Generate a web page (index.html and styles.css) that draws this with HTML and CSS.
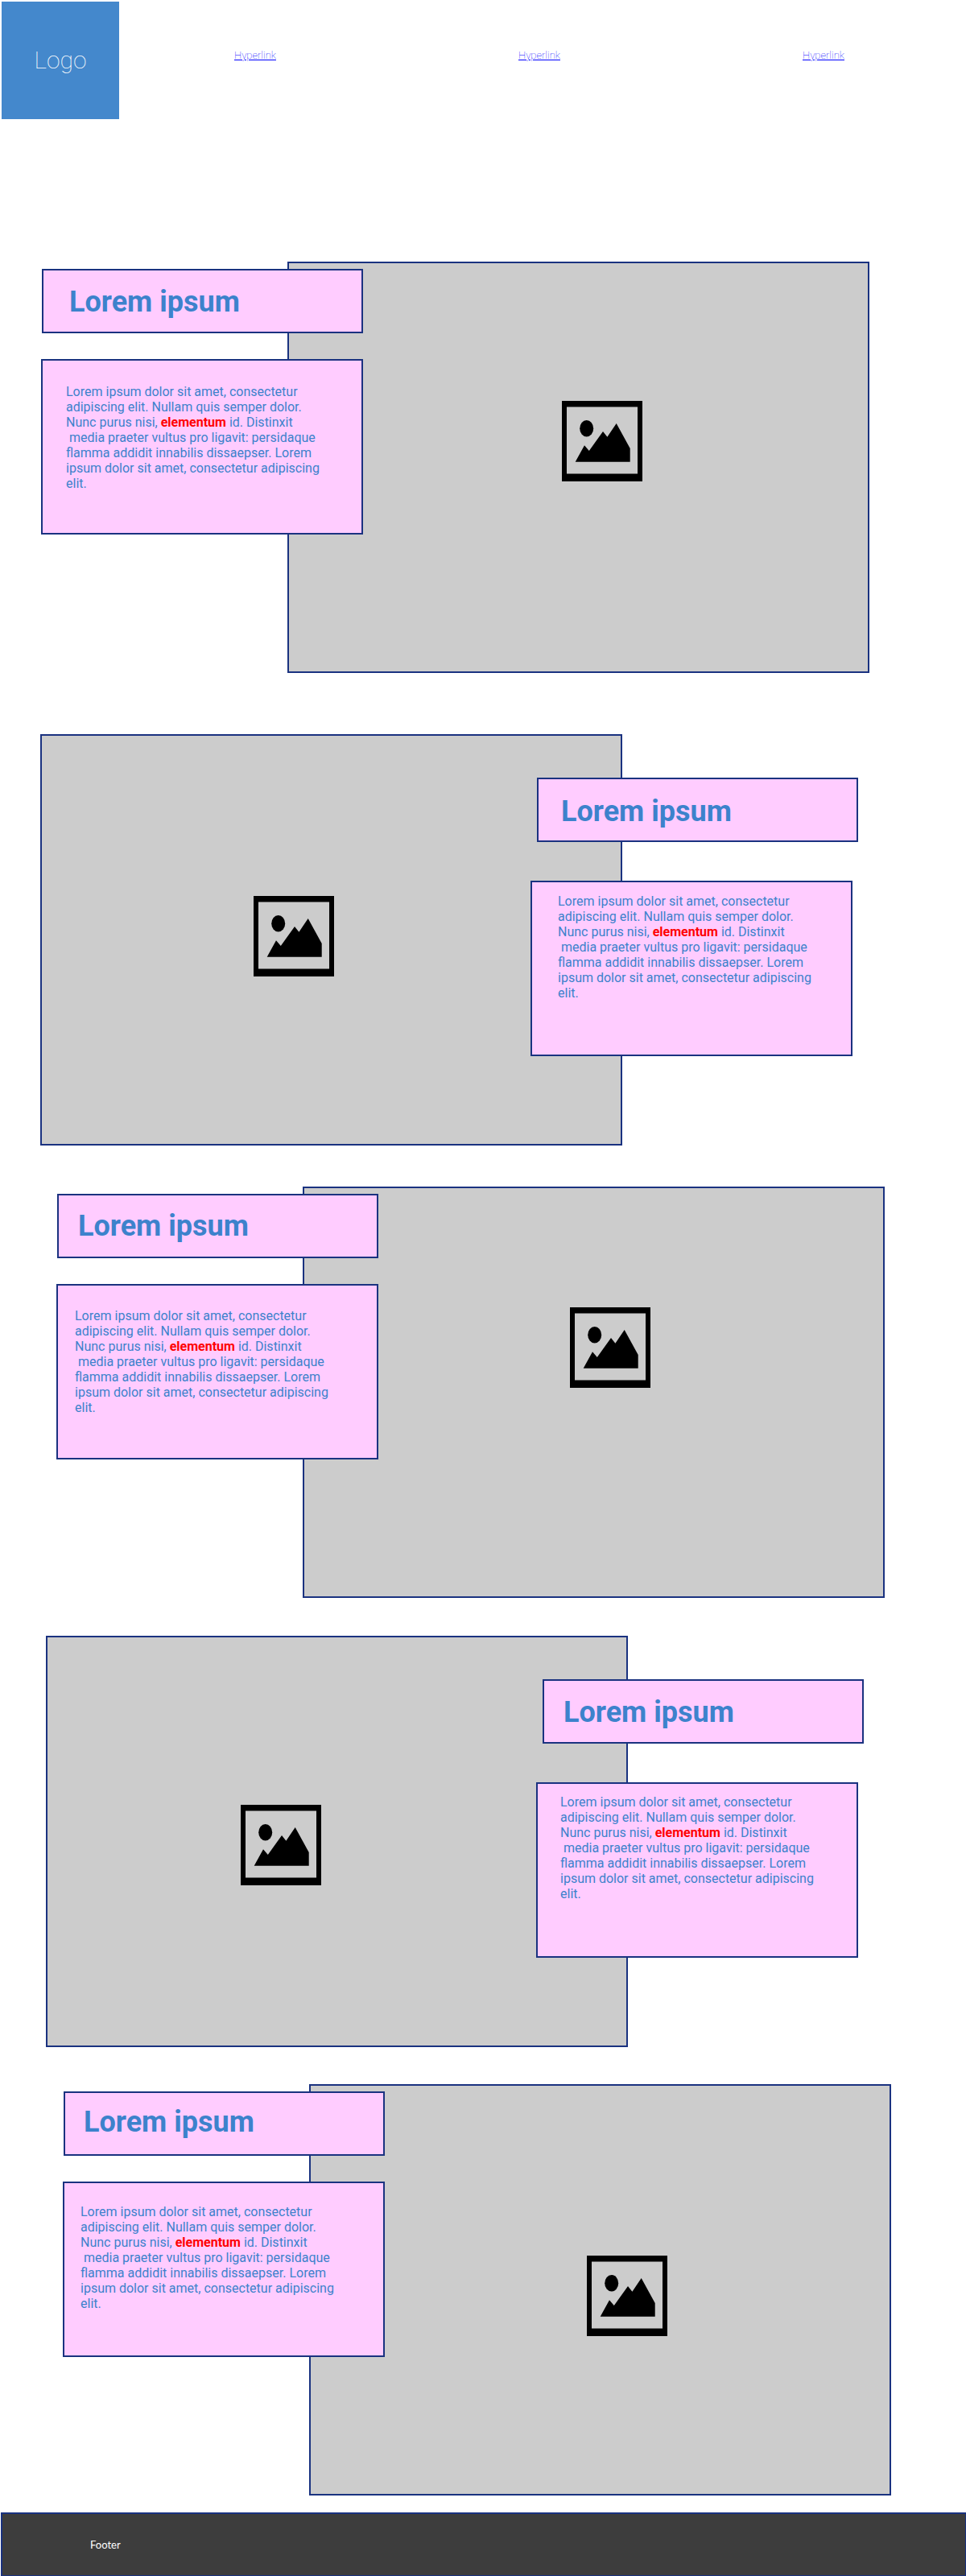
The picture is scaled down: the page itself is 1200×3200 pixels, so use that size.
FILE: index.html
```html
<!DOCTYPE html>
<html lang="en">
<head>
<meta charset="utf-8">
<title>Lorem ipsum</title>
<link rel="stylesheet" href="styles.css">
</head>
<body>
<svg class="sprite" width="0" height="0" aria-hidden="true">
  <symbol id="picture" viewBox="0 0 100 100">
    <path fill-rule="evenodd" d="M0 0H100V100H0ZM6 7.4V90.5H94V7.4Z"/>
    <ellipse cx="30.7" cy="34.3" rx="8.5" ry="10.3"/>
    <path d="M16.7 75.8L28 55.3L33.8 62L51 38L56.4 44.7L67.7 28L84.7 59V75.8Z"/>
  </symbol>
</svg>
<header class="header">
  <div class="logo">Logo</div>
  <nav class="nav">
    <a class="nav-link" href="#">Hyperlink</a>
    <a class="nav-link" href="#">Hyperlink</a>
    <a class="nav-link" href="#">Hyperlink</a>
  </nav>
</header>
<main class="main">
  <section class="feature feature-1">
    <div class="cards">
      <h2 class="title">Lorem ipsum</h2>
      <p class="copy">Lorem ipsum dolor sit amet, consectetur<br>adipiscing elit. Nullam quis semper dolor.<br>Nunc purus nisi, <strong>elementum</strong> id. Distinxit<br>&nbsp;media praeter vultus pro ligavit: persidaque<br>flamma addidit innabilis dissaepser. Lorem<br>ipsum dolor sit amet, consectetur adipiscing<br>elit.</p>
    </div>
    <figure class="media"><svg class="icon"><use href="#picture"/></svg></figure>
  </section>
  <section class="feature feature-right feature-2">
    <div class="cards">
      <h2 class="title">Lorem ipsum</h2>
      <p class="copy">Lorem ipsum dolor sit amet, consectetur<br>adipiscing elit. Nullam quis semper dolor.<br>Nunc purus nisi, <strong>elementum</strong> id. Distinxit<br>&nbsp;media praeter vultus pro ligavit: persidaque<br>flamma addidit innabilis dissaepser. Lorem<br>ipsum dolor sit amet, consectetur adipiscing<br>elit.</p>
    </div>
    <figure class="media"><svg class="icon"><use href="#picture"/></svg></figure>
  </section>
  <section class="feature feature-3">
    <div class="cards">
      <h2 class="title">Lorem ipsum</h2>
      <p class="copy">Lorem ipsum dolor sit amet, consectetur<br>adipiscing elit. Nullam quis semper dolor.<br>Nunc purus nisi, <strong>elementum</strong> id. Distinxit<br>&nbsp;media praeter vultus pro ligavit: persidaque<br>flamma addidit innabilis dissaepser. Lorem<br>ipsum dolor sit amet, consectetur adipiscing<br>elit.</p>
    </div>
    <figure class="media"><svg class="icon"><use href="#picture"/></svg></figure>
  </section>
  <section class="feature feature-right feature-4">
    <div class="cards">
      <h2 class="title">Lorem ipsum</h2>
      <p class="copy">Lorem ipsum dolor sit amet, consectetur<br>adipiscing elit. Nullam quis semper dolor.<br>Nunc purus nisi, <strong>elementum</strong> id. Distinxit<br>&nbsp;media praeter vultus pro ligavit: persidaque<br>flamma addidit innabilis dissaepser. Lorem<br>ipsum dolor sit amet, consectetur adipiscing<br>elit.</p>
    </div>
    <figure class="media"><svg class="icon"><use href="#picture"/></svg></figure>
  </section>
  <section class="feature feature-5">
    <div class="cards">
      <h2 class="title">Lorem ipsum</h2>
      <p class="copy">Lorem ipsum dolor sit amet, consectetur<br>adipiscing elit. Nullam quis semper dolor.<br>Nunc purus nisi, <strong>elementum</strong> id. Distinxit<br>&nbsp;media praeter vultus pro ligavit: persidaque<br>flamma addidit innabilis dissaepser. Lorem<br>ipsum dolor sit amet, consectetur adipiscing<br>elit.</p>
    </div>
    <figure class="media"><svg class="icon"><use href="#picture"/></svg></figure>
  </section>
</main>
<footer class="footer">Footer</footer>
</body>
</html>
```
FILE: styles.css
```css
* {
  box-sizing: border-box;
}

body {
  margin: 0;
  width: 1200px;
  height: 3200px;
  overflow: hidden;
  display: flex;
  flex-direction: column;
  background: #fff;
  font-family: Roboto, sans-serif;
}

.sprite {
  display: none;
}

.header {
  display: flex;
  height: 325px;
  padding: 2px 0 0 2px;
}

.logo {
  display: flex;
  align-items: center;
  justify-content: center;
  width: 146px;
  height: 146px;
  padding-bottom: 1px;
  background: #4488cc;
  color: #fff;
  font-size: 30px;
  font-weight: 100;
  line-height: 35px;
}

.nav {
  display: flex;
  gap: 301px;
  padding: 59px 0 0 143px;
}

.nav-link {
  width: 52px;
  color: #0000ff;
  font-size: 13px;
  font-weight: 100;
  line-height: 15px;
  white-space: nowrap;
}

.main {
  display: flex;
  flex-direction: column;
}

.feature {
  display: flex;
  height: 511px;
}

.feature-right {
  flex-direction: row-reverse;
  justify-content: flex-end;
}

.cards {
  z-index: 1;
  width: 400px;
  display: flex;
  flex-direction: column;
  gap: 32px;
  padding-top: 9px;
}

.feature-right .cards {
  width: 407px;
  gap: 48px;
  padding-top: 54px;
}

.title,
.copy {
  margin: 0;
  border: 2px solid #1a3280;
  background: #ffccff;
  color: #3d82cc;
  white-space: nowrap;
}

.title {
  width: 399px;
  height: 80px;
  align-self: flex-end;
  font-size: 36px;
  font-weight: 700;
  line-height: 42px;
}

.copy {
  width: 400px;
  height: 218px;
  font-size: 16px;
  line-height: 19px;
}

.copy strong {
  color: #ff0000;
  font-weight: 700;
}

.media {
  width: 723px;
  height: 511px;
  margin: 0 0 0 -94px;
  border: 2px solid #1a3280;
  background: #cccccc;
}

.feature-right .media {
  margin: 0 -114px 0 0;
}

.icon {
  display: block;
  width: 100px;
  height: 100px;
}

.feature-1 { margin-left: 51px; }
.feature-1 .title { padding: 18px 0 0 32px; }
.feature-1 .copy { padding: 29px 0 0 29px; }
.feature-1 .media { padding: 171px 0 0 339px; }

.feature-2 { margin: 76px 0 0 50px; }
.feature-2 .title { padding: 19px 0 0 28px; }
.feature-2 .copy { padding: 14px 0 0 32px; }
.feature-2 .media { padding: 199px 0 0 263px; }

.feature-3 { margin: 51px 0 0 70px; }
.feature-3 .title { padding: 17px 0 0 24px; }
.feature-3 .copy { padding: 28px 0 0 21px; }
.feature-3 .media { padding: 148px 0 0 330px; }

.feature-4 { margin: 47px 0 0 57px; }
.feature-4 .title { padding: 18px 0 0 24px; }
.feature-4 .copy { padding: 13px 0 0 28px; }
.feature-4 .media { padding: 208px 0 0 240px; }

.feature-5 { margin: 46px 0 0 78px; }
.feature-5 .title { padding: 15px 0 0 23px; }
.feature-5 .copy { padding: 26px 0 0 20px; }
.feature-5 .media { padding: 211px 0 0 343px; }

.footer {
  height: 79px;
  margin: 21px 0 0 1px;
  padding: 29px 0 0 109px;
  border: 2px solid #1a3280;
  border-width: 2px 1px 1px 2px;
  background: #3d3d3d;
  color: #fff;
  font-family: Lato, sans-serif;
  font-size: 13px;
  line-height: 18px;
}
```
